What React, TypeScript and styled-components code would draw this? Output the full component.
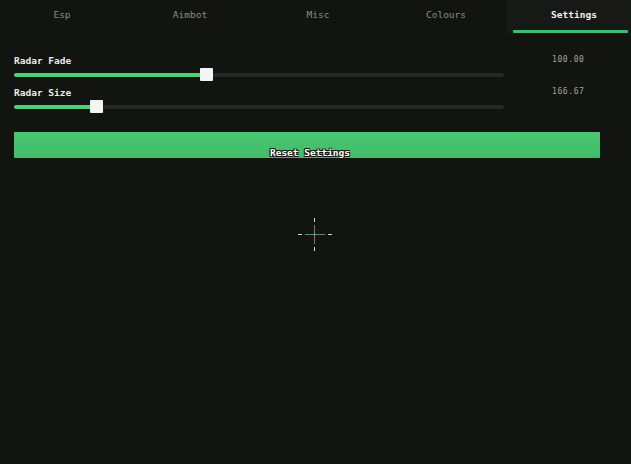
import React, { useState } from 'react';
import styled, { createGlobalStyle } from 'styled-components';

const GlobalStyle = createGlobalStyle`
    html, body {
        margin: 0;
        padding: 0;
        background: #121410;
        height: 100%;
    }
    #root {
        height: 100%;
    }
`

const Page = styled.div`
    position: relative;
    width: 631px;
    height: 464px;
    background: #121410;
    font-family: "DejaVu Sans Mono", "Liberation Mono", monospace;
    overflow: hidden;
`
const TabBar = styled.div`
    display: grid;
    grid-template-columns: repeat(5, 124px);
    column-gap: 4px;
    height: 34px;
`
const Tab = styled.div<{ $active?: boolean }>`
    position: relative;
    display: flex;
    justify-content: center;
    padding-top: 9px;
    box-sizing: border-box;
    font-size: 9.5px;
    font-weight: ${p => (p.$active ? 'bold' : 'normal')};
    color: ${p => (p.$active ? '#f2f2f2' : '#8b8d89')};
    background: ${p => (p.$active ? '#171917' : 'transparent')};
    margin-left: ${p => (p.$active ? '-5px' : '0')};
    padding-left: ${p => (p.$active ? '5px' : '0')};
    &::after {
        content: '';
        display: ${p => (p.$active ? 'block' : 'none')};
        position: absolute;
        left: 6px;
        right: 8px;
        bottom: 1px;
        height: 3px;
        background: #3fbf66;
        border-radius: 1px;
    }
`
const Content = styled.div`
    padding: 20px 31px 0 14px;
    display: flex;
    flex-direction: column;
`
const SliderRow = styled.div`
    display: grid;
    grid-template-columns: 490px 1fr;
    column-gap: 48px;
    height: 32px;
`
const SliderBox = styled.div`
    display: flex;
    flex-direction: column;
    gap: 4px;
`
const Label = styled.div`
    font-size: 9.5px;
    font-weight: bold;
    color: #ececec;
    line-height: 12px;
    padding-top: 1px;
`
const Track = styled.div`
    position: relative;
    height: 4px;
    background: #262825;
    border-radius: 2px;
    margin-top: 2px;
`
const Fill = styled.div`
    height: 100%;
    background: #4ccf72;
    border-radius: 2px;
`
const Thumb = styled.div`
    position: absolute;
    top: -5px;
    width: 13px;
    height: 13px;
    margin-left: -6px;
    background: #f4f4f4;
    border-radius: 1px;
`
const Value = styled.div`
    font-size: 8px;
    color: #a4a6a2;
    letter-spacing: 0.6px;
    line-height: 12px;
`
const ResetButton = styled.button`
    margin-top: 14px;
    width: 586px;
    height: 26px;
    border: none;
    border-radius: 1px;
    background: linear-gradient(#4cc674, #3fbd69);
    font-family: inherit;
    font-size: 9.5px;
    font-weight: bold;
    color: #ffffff;
    display: flex;
    align-items: flex-end;
    justify-content: center;
    padding: 0 0 0 6px;
    text-shadow: -1px -1px 0 #111, 1px -1px 0 #111, -1px 1px 0 #111, 1px 1px 0 #111;
    cursor: pointer;
`
const Crosshair = styled.svg`
    position: absolute;
    left: 298px;
    top: 218px;
`

const tabs = ['Esp', 'Aimbot', 'Misc', 'Colours', 'Settings']

const sliders = [
    { name: 'Radar Fade', pct: 39.2, value: '100.00' },
    { name: 'Radar Size', pct: 16.7, value: '166.67' },
]

const App = () => {
    const [active, setActive] = useState('Settings')
    return (
        <Page>
            <GlobalStyle />
            <TabBar>
                {tabs.map(t => (
                    <Tab key={t} $active={t === active} onClick={() => setActive(t)}>
                        {t}
                    </Tab>
                ))}
            </TabBar>
            <Content>
                {sliders.map(s => (
                    <SliderRow key={s.name}>
                        <SliderBox>
                            <Label>{s.name}</Label>
                            <Track>
                                <Fill style={{ width: `${s.pct}%` }} />
                                <Thumb style={{ left: `${s.pct}%` }} />
                            </Track>
                        </SliderBox>
                        <Value>{s.value}</Value>
                    </SliderRow>
                ))}
                <ResetButton>Reset Settings</ResetButton>
            </Content>
            <Crosshair width="34" height="33" viewBox="0 0 34 33">
                <g strokeWidth="1">
                    <line x1="0" y1="16.5" x2="4" y2="16.5" stroke="#d8d8d8" />
                    <line x1="7" y1="16.5" x2="27" y2="16.5" stroke="#5a8a6a" />
                    <line x1="30" y1="16.5" x2="34" y2="16.5" stroke="#d8d8d8" />
                    <line x1="16.5" y1="0" x2="16.5" y2="4" stroke="#d8d8d8" />
                    <line x1="16.5" y1="7" x2="16.5" y2="26" stroke="#5a8a6a" />
                    <line x1="16.5" y1="29" x2="16.5" y2="33" stroke="#d8d8d8" />
                    <rect x="15.5" y="15.5" width="2" height="2" fill="#a86a7a" />
                </g>
            </Crosshair>
        </Page>
    )
}

export default App
